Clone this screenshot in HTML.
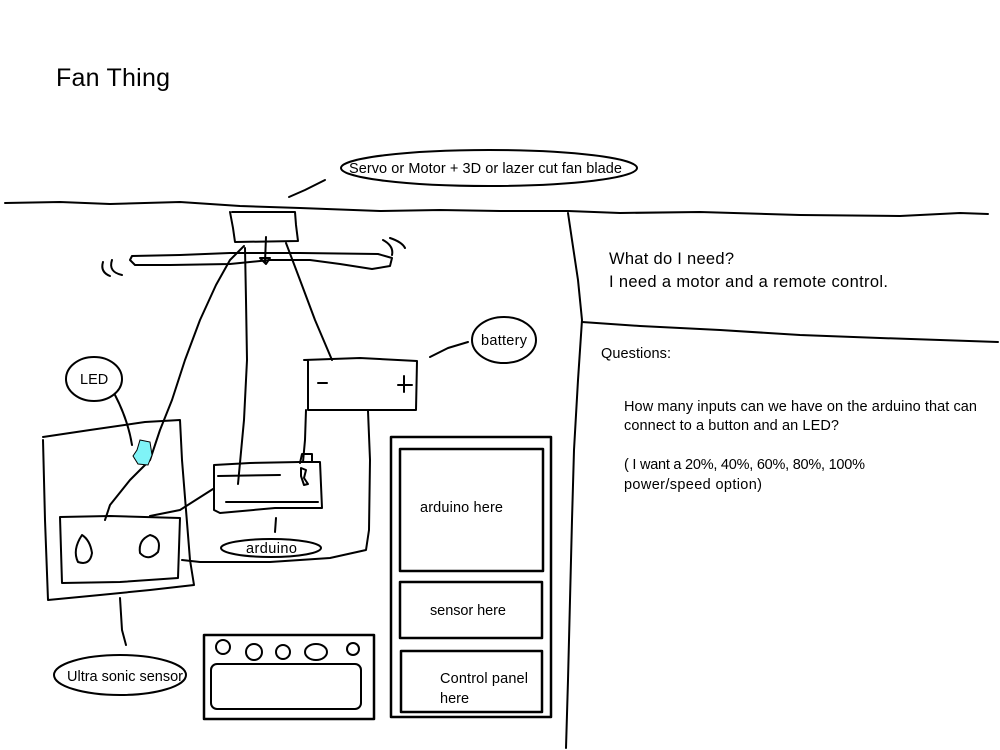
<!DOCTYPE html>
<html><head><meta charset="utf-8"><style>
html,body{margin:0;padding:0;background:#fff;width:1000px;height:750px;overflow:hidden}
svg{display:block}
text{font-family:"Liberation Sans",Calibri,sans-serif;fill:#000}
</style></head><body>
<svg width="1000" height="750" viewBox="0 0 1000 750" xmlns="http://www.w3.org/2000/svg">
<g fill="none" stroke="#000" stroke-width="2" stroke-linejoin="round" stroke-linecap="round">
<path d="M5 203 L60 202 L110 204 L180 202 L240 206 L300 208 L380 211 L440 210 L500 211 L568 211 L620 213 L700 212 L800 215 L900 216 L960 213 L988 214"/>
<path d="M568 213 L572 240 L578 280 L582 320 L578 380 L574 450 L572 520 L570 600 L568 680 L566 748"/>
<path d="M582 322 L640 326 L720 330 L800 335 L880 338 L940 340 L998 342"/>
<path d="M230 212 L233 228 L235 242 L298 241 L296 225 L295 212 L232 212"/>
<path d="M266 237 L265 262"/>
<path d="M260 258 L270 258 L266 264 Z"/>
<path d="M132 256 L180 255 L230 253 L300 253 L378 254 L392 258 L390 266 L372 269 L340 264 L310 260 L270 260 L230 264 L170 265 L135 265 L130 260 Z"/>
<path d="M103 262 Q100 272 110 276 M112 260 Q108 272 122 275"/>
<path d="M383 240 Q394 246 392 255 M390 238 Q402 242 405 248"/>
<path d="M244 246 L230 260 L216 285 L200 320 L185 360 L172 400 L160 430 L150 460 L130 480 L110 505 L105 520"/>
<path d="M245 248 L246 300 L247 360 L244 420 L238 484"/>
<path d="M286 243 L300 280 L315 320 L332 360"/>
<path d="M306 410 L305 440 L303 462"/>
<path d="M368 411 L370 460 L369 530 L366 550 L330 558 L270 562 L200 562 L182 560"/>
<path d="M213 489 L180 510 L150 516"/>
<path d="M304 360 L360 358 L417 361 L416 410 L350 410 L308 410 L308 360"/>
<path d="M318 383 L327 383 M398 385 L412 385 M404 376 L404 392"/>
<path d="M430 357 L448 348 L468 342"/>
<path d="M214 465 L250 463 L300 462 L320 462 L322 508 L275 508 L220 513 L214 510 Z"/>
<path d="M218 476 L280 475 M226 502 L318 502 M300 463 L302 454 L312 454 L312 462"/>
<path d="M301 468 L306 470 L304 478 L308 484 L304 485 L301 476 Z"/>
<path d="M276 518 L275 532"/>
<path d="M43 437 L90 430 L145 422 L180 420 L182 460 L186 510 L190 560 L194 585 L150 590 L100 595 L48 600 L45 520 L43 440"/>
<path d="M60 517 L110 516 L180 518 L178 578 L120 582 L62 583 Z"/>
<path d="M82 535 Q72 550 78 562 Q90 566 92 553 Q90 540 82 535 Z"/>
<path d="M150 535 Q138 540 140 553 Q148 562 158 552 Q162 538 150 535 Z"/>
<path d="M120 598 L122 630 L126 645"/>
<path d="M115 395 Q128 420 132 445"/>
<rect x="204" y="635" width="170" height="84" stroke-width="2.5"/>
<rect x="211" y="664" width="150" height="45" rx="6"/>
<circle cx="223" cy="647" r="7"/><circle cx="254" cy="652" r="8"/><circle cx="283" cy="652" r="7"/>
<ellipse cx="316" cy="652" rx="11" ry="8"/><circle cx="353" cy="649" r="6"/>
<rect x="391" y="437" width="160" height="280" stroke-width="2.5"/>
<rect x="400" y="449" width="143" height="122" stroke-width="2.5"/>
<rect x="400" y="582" width="142" height="56" stroke-width="2.5"/>
<rect x="401" y="651" width="141" height="61" stroke-width="2.5"/>
<path d="M289 197 L305 190 L325 180"/>
<ellipse cx="489" cy="168" rx="148" ry="18"/>
<ellipse cx="504" cy="340" rx="32" ry="23"/>
<ellipse cx="94" cy="379" rx="28" ry="22"/>
<ellipse cx="271" cy="548" rx="50" ry="9"/>
<ellipse cx="120" cy="675" rx="66" ry="20"/>
</g>
<path d="M140 440 L150 442 L152 455 L148 465 L138 464 L133 456 L137 450 Z" fill="#7ff3f7" stroke="#000" stroke-width="1"/>
<text x="56" y="86" font-size="25" textLength="114">Fan Thing</text>
<text x="349" y="173" font-size="14.5" textLength="273">Servo or Motor + 3D or lazer cut fan blade</text>
<text x="481" y="345" font-size="14.5" textLength="46">battery</text>
<text x="80" y="384" font-size="14.5">LED</text>
<text x="246" y="553" font-size="14.5" textLength="51">arduino</text>
<text x="67" y="681" font-size="14.5" textLength="116">Ultra sonic sensor</text>
<text x="420" y="512" font-size="14.5" textLength="83">arduino here</text>
<text x="430" y="615" font-size="14.5" textLength="76">sensor here</text>
<text x="440" y="683" font-size="14.5" textLength="88">Control panel</text>
<text x="440" y="703" font-size="14.5">here</text>
<text x="609" y="264" font-size="16.5" textLength="125">What do I need?</text>
<text x="609" y="287" font-size="16.5" textLength="279">I need a motor and a remote control.</text>
<text x="601" y="358" font-size="14.5" textLength="70">Questions:</text>
<text x="624" y="411" font-size="14.5" textLength="353">How many inputs can we have on the arduino that can</text>
<text x="624" y="430" font-size="14.5" textLength="215">connect to a button and an LED?</text>
<text x="624" y="469" font-size="14.5" textLength="241">( I want a 20%, 40%, 60%, 80%, 100%</text>
<text x="624" y="489" font-size="14.5" textLength="138">power/speed option)</text>
</svg>
</body></html>
